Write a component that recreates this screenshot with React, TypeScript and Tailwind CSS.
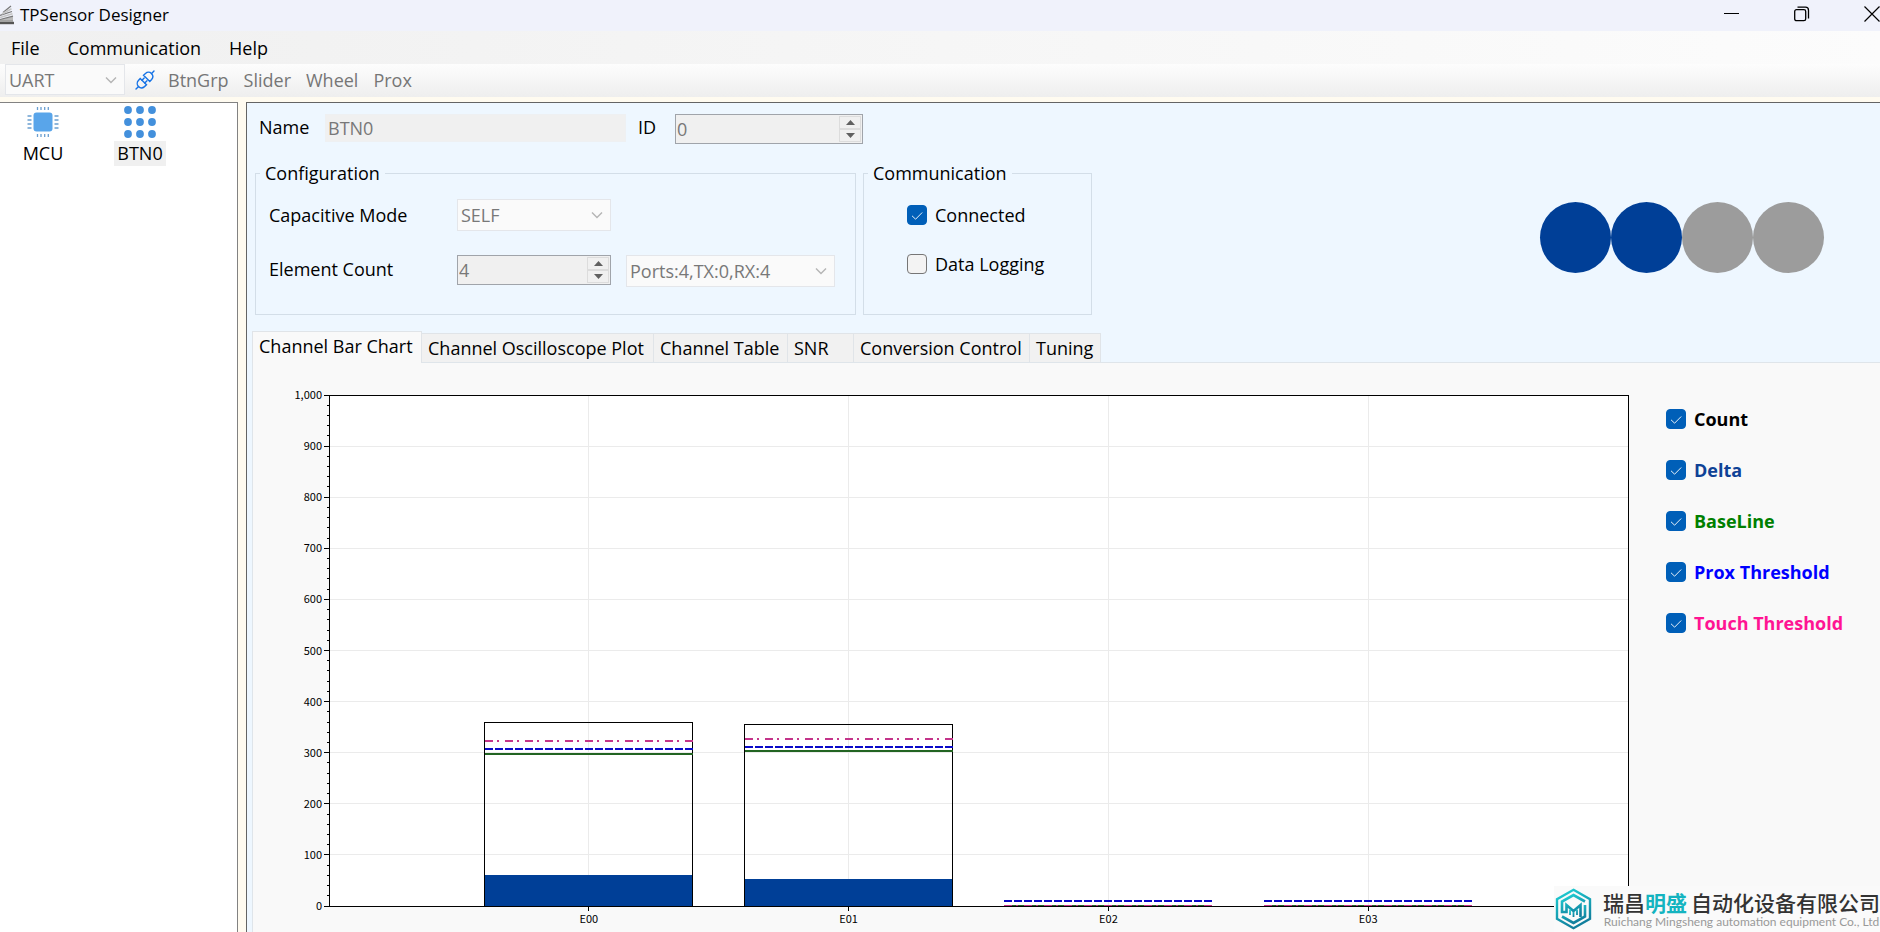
import React, { useState } from "react";
import clsx from "clsx";

const tabs = [
  { label: "Channel Bar Chart", width: "w-[170px]" },
  { label: "Channel Oscilloscope Plot", width: "w-[232px]" },
  { label: "Channel Table", width: "w-[134px]" },
  { label: "SNR", width: "w-[66px]" },
  { label: "Conversion Control", width: "w-[176px]" },
  { label: "Tuning", width: "w-[71px]" },
];

const series = [
  { label: "Count", color: "text-black" },
  { label: "Delta", color: "text-[#0f4296]" },
  { label: "BaseLine", color: "text-[#008000]" },
  { label: "Prox Threshold", color: "text-[#0000ff]" },
  { label: "Touch Threshold", color: "text-[#ff1493]" },
];

const channels = [
  { name: "E00", count: 360, delta: 61, base: 298, prox: 308, touch: 322 },
  { name: "E01", count: 356, delta: 53, base: 303, prox: 312, touch: 326 },
  { name: "E02", count: 0, delta: 0, base: 0, prox: 10, touch: 0 },
  { name: "E03", count: 0, delta: 0, base: 0, prox: 10, touch: 0 },
];

const MAX = 1000;
const yPos = (value: number) => `${100 - (value / MAX) * 100}%`;

function Chevron() {
  return (
    <svg
      className="pointer-events-none absolute right-2 top-1/2 -mt-1 h-2 w-3"
      viewBox="0 0 12 8"
      fill="none"
      stroke="#b4b4b4"
      strokeWidth="1.4"
    >
      <path d="M1 1.5 6 6.5 11 1.5" />
    </svg>
  );
}

function Select({ id, label, value, className }: { id: string; label?: string; value: string; className: string }) {
  return (
    <div className={clsx("relative", className)}>
      <select
        id={id}
        aria-label={label}
        disabled
        className="h-full w-full appearance-none border border-[#e4e6ea] bg-[#fafafa] pl-[3px] text-[#787878] opacity-100"
      >
        <option>{value}</option>
      </select>
      <Chevron />
    </div>
  );
}

function Spinner({ id, value, className }: { id: string; value: number; className: string }) {
  return (
    <div className={clsx("flex h-[30px] border border-[#a0a4aa] bg-[#f0f0f0] p-px", className)}>
      <input
        id={id}
        type="number"
        defaultValue={value}
        disabled
        className="min-w-0 flex-1 bg-transparent text-[#787878] [appearance:textfield] [&::-webkit-inner-spin-button]:appearance-none"
      />
      <div className="flex w-[22px] flex-col">
        <button type="button" aria-label="Increase" disabled className="flex flex-1 items-center justify-center border border-[#dcdcdc]">
          <svg className="h-[5px] w-[9px]" viewBox="0 0 9 5" fill="#606060">
            <path d="M4.5 0 9 5H0z" />
          </svg>
        </button>
        <button type="button" aria-label="Decrease" disabled className="flex flex-1 items-center justify-center border border-[#dcdcdc]">
          <svg className="h-[5px] w-[9px]" viewBox="0 0 9 5" fill="#606060">
            <path d="M0 0h9L4.5 5z" />
          </svg>
        </button>
      </div>
    </div>
  );
}

function Check({ label, checked = false, className }: { label: string; checked?: boolean; className?: string }) {
  return (
    <label className={clsx("flex h-6 items-center gap-2 whitespace-nowrap", className)}>
      <span className="grid h-5 w-5 shrink-0">
        <input
          type="checkbox"
          defaultChecked={checked}
          className="peer col-start-1 row-start-1 h-5 w-5 appearance-none rounded-[4px] border border-[#767676] bg-[#f3f3f3] checked:border-[#005fb8] checked:bg-[#005fb8]"
        />
        <svg
          className="pointer-events-none col-start-1 row-start-1 hidden h-5 w-5 peer-checked:block"
          viewBox="0 0 20 20"
          fill="none"
          stroke="#fff"
          strokeWidth="0.9"
        >
          <path d="M5 10.8 8.6 14.2 15.2 7.5" />
        </svg>
      </span>
      {label}
    </label>
  );
}

function TitleBar() {
  return (
    <header className="flex h-[31px] shrink-0 items-center justify-between bg-[#f0f2fb] pb-2">
      <div className="flex items-center">
        <svg className="mr-[6px] mt-[6px] h-5 w-[14px]" viewBox="0 0 14 20" fill="none">
          <path d="M0 18h14" stroke="#555" strokeWidth="2.4" />
          <path d="M0 14.5 13 11.5V17H0z" fill="#b9b9b9" />
          <path d="M0 14.5 13 11.2M0 10.5 12 6.5M3 7.5 11 1" stroke="#777" strokeWidth="1.2" />
          <path d="M0 12.5 12.5 8.8M2 9 11.5 3.8" stroke="#c4c4c4" strokeWidth="1.6" />
          <path d="M0 16h13" stroke="#8d8d8d" />
        </svg>
        <h1 className="mt-[6px] text-[17px] leading-6">TPSensor Designer</h1>
      </div>
      <div className="mt-1 flex gap-[54px]">
        <button type="button" aria-label="Minimize">
          <svg className="h-4 w-4" viewBox="0 0 16 16" stroke="#000">
            <path d="M0 7.5h15" />
          </svg>
        </button>
        <button type="button" aria-label="Restore">
          <svg className="h-4 w-4" viewBox="0 0 16 16" fill="none" stroke="#000" strokeWidth="1.3">
            <rect x="0.7" y="3.7" width="11" height="11" rx="1.8" />
            <path d="M3.5 1.2h8a3 3 0 0 1 3 3v8.3" />
          </svg>
        </button>
        <button type="button" aria-label="Close">
          <svg className="h-4 w-4" viewBox="0 0 16 16" stroke="#000" strokeWidth="1.2">
            <path d="M.5.5l15 15M15.5.5l-15 15" />
          </svg>
        </button>
      </div>
    </header>
  );
}

function MenuBar() {
  return (
    <nav className="flex h-[33px] shrink-0 items-center gap-[28px] bg-linear-to-r from-[#f0f0f0] to-[#fcfcfc] pl-[11px]">
      <button type="button">File</button>
      <button type="button">Communication</button>
      <button type="button">Help</button>
    </nav>
  );
}

function ToolBar() {
  return (
    <div className="flex h-[33px] shrink-0 items-center bg-linear-to-b from-[#fdfdfd] to-[#eeeeee] pb-[2px] pl-[5px] text-[#767676]">
      <Select id="port" label="Port" value="UART" className="h-[31px] w-[120px]" />
      <button type="button" aria-label="Connect" className="ml-[10px]">
        <svg className="h-5 w-5" viewBox="0 0 20 20" fill="none" stroke="#1673e6" strokeWidth="1.4" strokeLinecap="round">
          <path d="M1 19l2.6-2.6M16.6 3.4 19 1" />
          <path d="M5.2 8.5 11.5 14.8 9.5 16.6C7.5 18.3 5 18 3.4 16.4 1.8 14.8 1.9 12.2 3.4 10.5z" />
          <path d="M8.5 5.2 14.8 11.5 16.6 9.5C18.3 7.5 18 5 16.4 3.4 14.8 1.8 12.2 1.9 10.5 3.4z" />
          <path d="M7 10.3 9.2 8M9.8 13 12 10.8" />
        </svg>
      </button>
      <div className="ml-[13px] flex gap-[15px]">
        <button type="button" disabled>BtnGrp</button>
        <button type="button" disabled>Slider</button>
        <button type="button" disabled>Wheel</button>
        <button type="button" disabled>Prox</button>
      </div>
    </div>
  );
}

function Devices() {
  return (
    <aside className="flex w-[238px] shrink-0 items-start border-r border-t border-[#828282] bg-white pt-[3px]">
      <button type="button" className="flex w-[86px] flex-col items-center gap-[3px]">
        <svg className="h-8 w-8" viewBox="0 0 32 32" fill="#59a5ea">
          <rect x="6.5" y="6.5" width="19" height="19" rx="3" />
          <path
            d="M10.5 1v3M14 1v3M17.7 1v3M21.3 1v3M10.5 28v3M14 28v3M17.7 28v3M21.3 28v3M.5 10h4M.5 14h4M.5 18h4M.5 22h4M27.5 10h4M27.5 14h4M27.5 18h4M27.5 22h4"
            stroke="#6a9fd0"
            strokeWidth="1.3"
          />
        </svg>
        <span className="px-[5px] leading-[25px]">MCU</span>
      </button>
      <button type="button" className="ml-[26px] flex w-[56px] flex-col items-center gap-[3px]">
        <svg className="h-8 w-8" viewBox="0 0 32 32" fill="#4390dc">
          {[4, 16, 28].map((cy) =>
            [4, 16, 28].map((cx) => <circle key={`${cx}-${cy}`} cx={cx} cy={cy} r="3.9" />)
          )}
        </svg>
        <span className="bg-[#f0f0f0] px-[3px] leading-[25px]">BTN0</span>
      </button>
    </aside>
  );
}

function Settings() {
  return (
    <section className="flex shrink-0 justify-between pb-4">
      <div>
        <div className="flex pl-3 pt-[11px]">
          <label htmlFor="name" className="w-[66px] leading-[26px]">Name</label>
          <input
            id="name"
            defaultValue="BTN0"
            disabled
            className="h-7 w-[301px] border border-[#eef0f2] bg-[#f0f0f0] pl-[2px] text-[#787878]"
          />
          <label htmlFor="id" className="ml-3 w-[37px] leading-[26px]">ID</label>
          <Spinner id="id" value={0} className="w-[188px]" />
        </div>
        <div className="ml-2 mt-[17px] flex gap-[7px]">
          <fieldset className="w-[601px] border border-[#d3dee8] pb-[27px]">
            <legend className="ml-1 px-[5px]">Configuration</legend>
            <div className="mt-[14px] flex items-center pl-[13px]">
              <label htmlFor="mode" className="w-[188px]">Capacitive Mode</label>
              <Select id="mode" value="SELF" className="h-8 w-[154px]" />
            </div>
            <div className="mt-6 flex pl-[13px]">
              <label htmlFor="elements" className="w-[188px] leading-7">Element Count</label>
              <Spinner id="elements" value={4} className="w-[154px]" />
              <Select id="ports" label="Ports" value="Ports:4,TX:0,RX:4" className="ml-[15px] h-8 w-[209px]" />
            </div>
          </fieldset>
          <fieldset className="w-[229px] border border-[#d3dee8]">
            <legend className="ml-1 px-[5px]">Communication</legend>
            <Check label="Connected" checked className="ml-[43px] mt-[18px]" />
            <Check label="Data Logging" className="ml-[43px] mt-[25px]" />
          </fieldset>
        </div>
      </div>
      <div className="flex pr-[56px] pt-[99px]">
        {[true, true, false, false].map((on, i) => (
          <span key={i} className={clsx("h-[71px] w-[71px] rounded-full", on ? "bg-[#003f97]" : "bg-[#9c9c9c]")} />
        ))}
      </div>
    </section>
  );
}

function BarChart() {
  const ticks = Array.from({ length: 51 }, (_, i) => i * 20);
  return (
    <svg className="block h-full w-full overflow-visible" shapeRendering="crispEdges">
      <rect width="100%" height="100%" fill="#fff" />
      {ticks
        .filter((t) => t % 100 === 0)
        .map((t) => (
          <line key={t} x1="0" x2="100%" y1={yPos(t)} y2={yPos(t)} stroke="#ebebeb" />
        ))}
      {channels.map((c, i) => (
        <line key={c.name} x1={`${(i + 1) * 20}%`} x2={`${(i + 1) * 20}%`} y1="0" y2="100%" stroke="#ebebeb" />
      ))}
      {channels.map((c, i) => {
        const left = `${(i + 1) * 20 - 8}%`;
        const right = `${(i + 1) * 20 + 8}%`;
        return (
          <g key={c.name}>
            {c.delta > 0 && (
              <rect x={left} y={yPos(c.delta)} width="16%" height={`${c.delta / 10}%`} fill="#003f97" />
            )}
            {c.count > 0 && (
              <rect x={left} y={yPos(c.count)} width="16%" height={`${c.count / 10}%`} fill="none" stroke="#000" />
            )}
            <line x1={left} x2={right} y1={yPos(c.base)} y2={yPos(c.base)} stroke="#226422" strokeWidth="2" />
            <line x1={left} x2={right} y1={yPos(c.prox)} y2={yPos(c.prox)} stroke="#0a0ac8" strokeWidth="2" strokeDasharray="8 2" />
            <line x1={left} x2={right} y1={yPos(c.touch)} y2={yPos(c.touch)} stroke="#c4348a" strokeWidth="2" strokeDasharray="8 4 2 6" />
          </g>
        );
      })}
      <rect width="100%" height="100%" fill="none" stroke="#000" />
      {ticks.map((t) => (
        <line key={t} x1={t % 100 === 0 ? -5 : -2} x2="0" y1={yPos(t)} y2={yPos(t)} stroke="#000" />
      ))}
      <g className="font-['Noto_Sans_CJK_SC',sans-serif] text-[11px]">
        {ticks
          .filter((t) => t % 100 === 0)
          .map((t) => (
            <text key={t} x="-7" y={yPos(t)} dy="4" textAnchor="end">
              {t.toLocaleString("en-US")}
            </text>
          ))}
        {channels.map((c, i) => (
          <text key={c.name} x={`${(i + 1) * 20}%`} y="100%" dy="17" textAnchor="middle">
            {c.name}
          </text>
        ))}
      </g>
      {channels.map((c, i) => (
        <svg key={c.name} x={`${(i + 1) * 20}%`} y="100%" className="overflow-visible">
          <line y2="5" stroke="#000" />
        </svg>
      ))}
    </svg>
  );
}

function Company() {
  return (
    <footer className="absolute bottom-0 right-0 flex h-[46px] items-center gap-[11px] bg-[#fafafa] pl-px">
      <svg className="h-[42px] w-[37px]" viewBox="0 0 37 42" fill="none">
        <defs>
          <linearGradient id="mark" x1="0" y1="0" x2="0.4" y2="1">
            <stop offset="0" stopColor="#1fd3d6" />
            <stop offset="1" stopColor="#127f9d" />
          </linearGradient>
        </defs>
        <path d="M18.5 1.8 35 11.2v19.6l-16.5 9.4L2 30.8V11.2z" stroke="url(#mark)" strokeWidth="2.4" />
        <g stroke="url(#mark)" strokeWidth="2.6">
          <path d="M30 13.5 18.5 7 7 13.5V24h4.5v-7l7 6 7-6v12" />
          <path d="M7 28.5 18.5 35 30 28.5V17" />
          <path d="M15 27v-5.500M18.500 29v-5M22 27v-5.500" strokeWidth="1.8" />
        </g>
      </svg>
      <div className="flex flex-col items-center whitespace-nowrap font-['Noto_Sans_CJK_SC',sans-serif]">
        <p className="text-[21px] font-medium leading-[26px] text-[#333]">
          瑞昌<span className="mr-1 font-bold text-[#14b4c0]">明盛</span>自动化设备有限公司
        </p>
        <p className="font-[Lato,sans-serif] text-[12px] leading-[14px] text-[#999]">
          Ruichang Mingsheng automation equipment Co., Ltd
        </p>
      </div>
    </footer>
  );
}

export default function App() {
  const [active, setActive] = useState(0);
  return (
    <div className="relative flex h-screen min-h-[700px] flex-col overflow-hidden bg-[#fffbf0] font-['Open_Sans','Noto_Sans',sans-serif] text-[18px] leading-6 text-black">
      <TitleBar />
      <MenuBar />
      <ToolBar />
      <div className="flex min-h-0 flex-1 gap-2 pt-[5px]">
        <Devices />
        <main className="flex min-w-0 flex-1 flex-col border-l border-t border-[#646464] bg-[#eef7ff]">
          <Settings />
          <div role="tablist" className="ml-[5px] flex shrink-0 items-end">
            {tabs.map((tab, i) => (
              <button
                key={tab.label}
                type="button"
                role="tab"
                aria-selected={i === active}
                onClick={() => setActive(i)}
                className={clsx(
                  "whitespace-nowrap border-r border-t border-[#e0e4e8] pl-[6px] text-left",
                  tab.width,
                  i === active ? "relative -mb-px h-8 border-l bg-[#f9f9f9] pb-1" : "h-[29px] bg-[#f1f1f1]"
                )}
              >
                {tab.label}
              </button>
            ))}
          </div>
          <section className="ml-[5px] flex min-h-0 flex-1 border-l border-t border-[#dfe5ea] bg-[#f9f9f9] pb-[26px] pl-[76px] pt-8">
            <div className="min-w-0 flex-1">
              <BarChart />
            </div>
            <div className="flex w-[252px] shrink-0 flex-col gap-[27px] pl-[38px] pt-3 font-bold">
              {series.map((s) => (
                <Check key={s.label} label={s.label} checked className={s.color} />
              ))}
            </div>
          </section>
        </main>
      </div>
      <Company />
    </div>
  );
}
